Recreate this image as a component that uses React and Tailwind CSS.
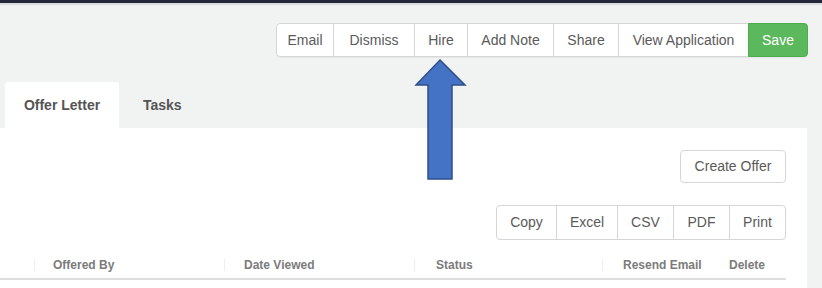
import React from 'react';

const actions = [
    { label: 'Email', width: 'w-[58px]' },
    { label: 'Dismiss', width: 'w-[82px]' },
    { label: 'Hire', width: 'w-[54px]' },
    { label: 'Add Note', width: 'w-[87px]' },
    { label: 'Share', width: 'w-[66px]' },
    { label: 'View Application', width: 'w-[131px]' },
];

const exports = [
    { label: 'Copy', width: 'w-[61px]' },
    { label: 'Excel', width: 'w-[62px]' },
    { label: 'CSV', width: 'w-[57px]' },
    { label: 'PDF', width: 'w-[57px]' },
    { label: 'Print', width: 'w-[57px]' },
];

const columns = [
    { label: '', width: 'w-[35px]', pad: 'pl-[18px]', mark: true },
    { label: 'Offered By', width: 'w-[190px]', pad: 'pl-[18px]', mark: true },
    { label: 'Date Viewed', width: 'w-[190px]', pad: 'pl-[19px]', mark: true },
    { label: 'Status', width: 'w-[188px]', pad: 'pl-[21px]', mark: true },
    { label: 'Resend Email', width: 'w-[106px]', pad: 'pl-[20px]' },
    { label: 'Delete', width: 'flex-1', pad: 'pl-[20px]' },
];

const UpArrow = () => (
    <svg className="absolute left-[414px] top-[58px]" width="54" height="124" viewBox="0 0 54 124">
        <path
            d="M26 2 L51 27 L38 27 L38 121 L14 121 L14 27 L2 27 Z"
            fill="#4472c4"
            stroke="#2f4f8a"
            strokeWidth="1.5"
        />
    </svg>
);

const App = () => {
    return (
        <div className="relative w-[822px] h-[288px] overflow-hidden bg-[#f1f2f2] font-['Liberation_Sans',Arial,sans-serif]">
            <div className="h-[3px] bg-[#24263a]"></div>
            <div className="h-[2px] bg-[#d9dbe0]"></div>

            {/* top actions */}
            <div className="flex justify-end pr-[14px] pt-[18px]">
                <div className="flex h-[34px] rounded-[4px] shadow-[0_1px_1px_rgba(0,0,0,0.05)]">
                    {actions.map((a, i) => (
                        <button
                            key={a.label}
                            className={`${a.width} h-full bg-white border border-[#d6d6d6] text-[14px] text-[#5a5a5a] ${i === 0 ? 'rounded-l-[4px]' : '-ml-px'}`}
                        >
                            {a.label}
                        </button>
                    ))}
                    <button className="w-[60px] h-full -ml-px bg-[#5cb85c] border border-[#4cae4c] rounded-r-[4px] text-[14px] text-white">
                        Save
                    </button>
                </div>
            </div>

            {/* tabs */}
            <div className="flex items-end pl-[5px] mt-[25px] h-[46px]">
                <div className="h-full w-[114px] bg-white rounded-t-[3px] flex items-center justify-center text-[14px] font-bold text-[#555]">
                    Offer Letter
                </div>
                <div className="h-full px-[24px] flex items-center text-[14px] font-bold text-[#555]">
                    Tasks
                </div>
            </div>

            {/* panel */}
            <div className="bg-white w-[807px] h-[200px] pr-[21px]">
                <div className="flex justify-end pt-[22px]">
                    <button className="w-[106px] h-[33px] bg-white border border-[#d6d6d6] rounded-[4px] text-[14px] text-[#5a5a5a]">
                        Create Offer
                    </button>
                </div>
                <div className="flex justify-end mt-[22px]">
                    <div className="flex h-[35px]">
                        {exports.map((e, i) => (
                            <button
                                key={e.label}
                                className={`${e.width} h-full bg-white border border-[#d6d6d6] text-[14px] text-[#5a5a5a] ${i === 0 ? 'rounded-l-[4px]' : '-ml-px'} ${i === exports.length - 1 ? 'rounded-r-[4px]' : ''}`}
                            >
                                {e.label}
                            </button>
                        ))}
                    </div>
                </div>

                {/* table header */}
                <div className="flex h-[37px] mt-[3px] items-center border-b-2 border-[#dddddd] w-[786px]">
                    {columns.map((col, i) => (
                        <div key={i} className={`${col.width} h-full flex items-center pt-[8px]`}>
                            {col.label && (
                                <span className={`${col.pad} text-[12px] font-bold text-[#7b7b7b] whitespace-nowrap`}>
                                    {col.label}
                                </span>
                            )}
                            {col.mark && <span className="ml-auto w-px h-[12px] bg-[#eeeeee]"></span>}
                        </div>
                    ))}
                </div>
            </div>

            <UpArrow />
        </div>
    );
};

export default App;
